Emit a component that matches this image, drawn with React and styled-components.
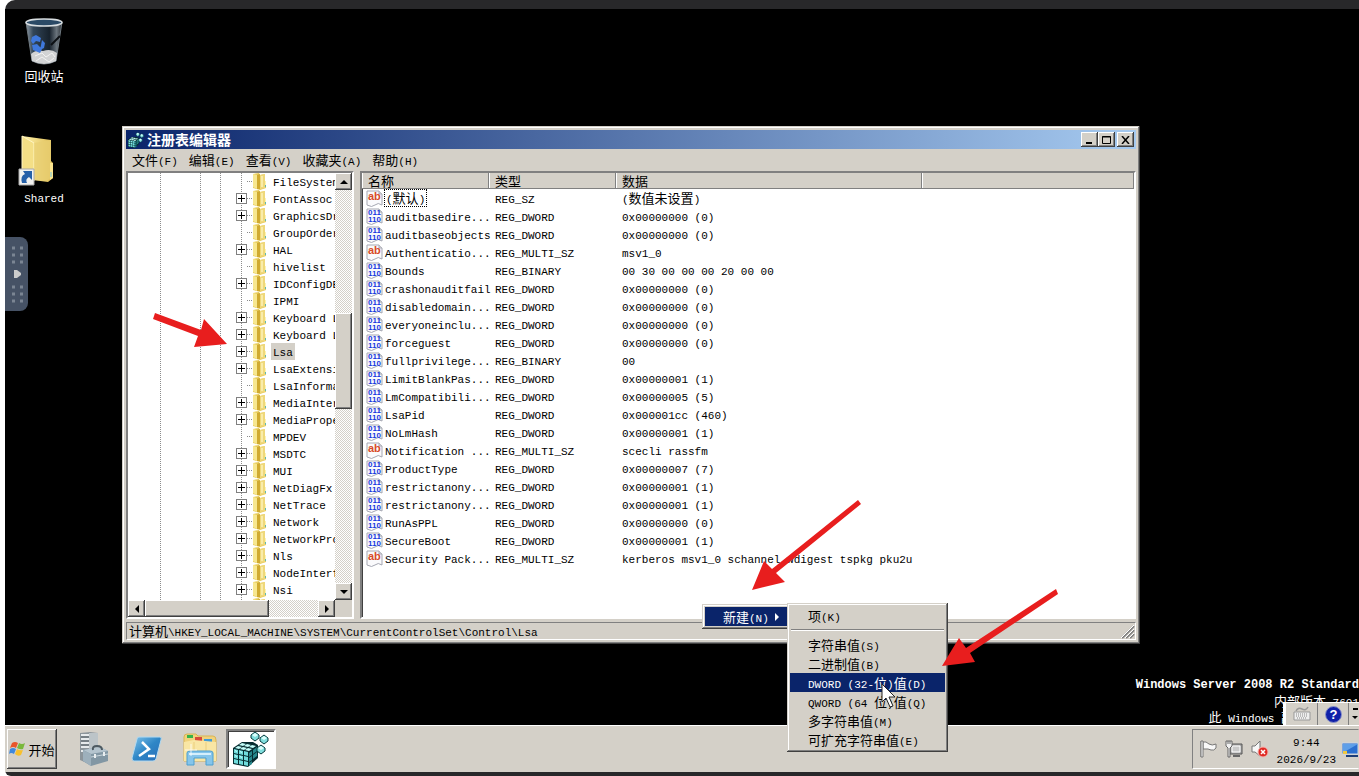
import React from 'react';
import styled, { createGlobalStyle, css } from 'styled-components';

const FACE = '#d4d0c8';
const NAVY = '#0a246a';
const CJK = '"Noto Sans CJK SC", "Liberation Sans", sans-serif';
const MONO = '"Liberation Mono", "Noto Sans CJK SC", monospace';

const GlobalStyle = createGlobalStyle`
  *, *::before, *::after { box-sizing: border-box; }
  body { margin: 0; background: #fff; overflow: hidden; }
  button { font: inherit; color: inherit; padding: 0; margin: 0; border: 0; background: none; }
  ul { list-style: none; margin: 0; padding: 0; }
  svg { display: block; flex: none; }
`;

const raised = css`
  background: ${FACE};
  box-shadow: inset -1px -1px #404040, inset 1px 1px #fff, inset -2px -2px #808080;
`;
const menuEdge = css`
  background: ${FACE};
  box-shadow: inset -1px -1px #404040, inset 1px 1px ${FACE}, inset -2px -2px #808080, inset 2px 2px #fff;
`;
const sunken = css`
  border: 2px solid;
  border-color: #808080 #fff #fff #808080;
  box-shadow: inset 1px 1px #404040;
`;

/* ---------- text ---------- */

const Han = styled.span`
  font-family: ${CJK};
  font-size: 13px;
  white-space: pre;
`;
const Latin = styled.span`
  font-family: ${MONO};
  font-size: 11px;
  line-height: 11px;
  white-space: pre;
`;

function Label({ children }) {
  const parts = children.split(/([\x20-\x7e]+)/).filter(Boolean);
  return (
    <Han>
      {parts.map((part, i) => (/^[\x20-\x7e]/.test(part) ? <Latin key={i}>{part}</Latin> : part))}
    </Han>
  );
}

/* ---------- shell ---------- */

const Frame = styled.div`
  display: flex;
  flex-direction: column;
  min-height: 100vh;
  margin-left: 5px;
  padding: 9px 0 4px;
  background: #28282a;
  border-radius: 10px 0 0 6px;
  color: #000;
  font-family: ${CJK};
  font-size: 13px;
  line-height: 17px;
`;
const Desktop = styled.main`
  position: relative;
  flex: 1;
  background: #000;
  overflow: hidden;
`;
const Shortcut = styled.button`
  position: absolute;
  left: 0;
  top: ${(p) => p.$top}px;
  display: flex;
  flex-direction: column;
  align-items: center;
  gap: 1px;
  width: 78px;
  color: #fff;
`;
const Drawer = styled.button`
  position: absolute;
  left: 0;
  top: 228px;
  display: grid;
  place-items: center;
  width: 23px;
  height: 74px;
  background: #465265;
  border-radius: 0 8px 8px 0;
`;
const Watermark = styled.div`
  position: absolute;
  right: 0;
  bottom: 0;
  display: flex;
  flex-direction: column;
  align-items: flex-end;
  line-height: 15px;
  color: #fff;
`;
const Edition = styled.strong`
  font-family: ${MONO};
  font-size: 12px;
`;
const LanguageBar = styled.div`
  position: absolute;
  right: 0;
  bottom: 0;
  display: flex;
  align-items: center;
  width: 76px;
  height: 23px;
  border-left: 3px solid #fff;
  border-top: 1px solid #fff;
  background: ${FACE};
`;
const LanguageButton = styled.button`
  display: grid;
  place-items: center;
  width: ${(p) => p.$width}px;
  height: 22px;
  border-right: 1px solid #808080;
`;

/* ---------- window ---------- */

const Window = styled.section`
  position: absolute;
  left: 117px;
  right: 219px;
  top: 117px;
  padding: 4px;
  ${menuEdge}
`;
const TitleBar = styled.header`
  display: flex;
  align-items: center;
  height: 19px;
  padding: 0 2px;
  gap: 3px;
  background: linear-gradient(90deg, ${NAVY}, #a6caf0);
`;
const Title = styled.h1`
  flex: 1;
  margin: 0;
  color: #fff;
  font-size: 14px;
  font-weight: 700;
  line-height: 19px;
`;
const CaptionButtons = styled.div`
  display: flex;
  & > :last-child { margin-left: 2px; }
`;
const CaptionButton = styled.button`
  display: grid;
  place-items: center;
  width: 17px;
  height: 15px;
  ${raised}
`;
const MenuBar = styled.nav`
  display: flex;
  gap: 11px;
  height: 22px;
  padding: 1px 6px 0;
`;
const MenuBarItem = styled.button`
  height: 19px;
  line-height: 19px;
`;
const Body = styled.div`
  display: flex;
  gap: 6px;
`;
const TreePane = styled.div`
  width: 228px;
  background: ${FACE};
  ${sunken}
`;
const TreeTop = styled.div`
  display: flex;
  height: 427px;
`;
const guide = (x) =>
  `repeating-linear-gradient(#8c8c8c 0 1px, transparent 1px 2px) ${x}px 0 / 1px 100% no-repeat`;
const Tree = styled.ul`
  flex: 1;
  min-width: 0;
  overflow: hidden;
  background: ${guide(32)}, ${guide(72)}, ${guide(92)}, ${guide(113)}, #fff;
`;
const TreeRow = styled.li`
  display: flex;
  align-items: center;
  height: 17px;
  padding-left: 108px;
  white-space: nowrap;
`;
const Expander = styled.button`
  display: grid;
  place-items: center;
  flex: none;
  width: 11px;
  height: 11px;
  border: 1px solid #808080;
  background: #fff;
`;
const NoExpander = styled.span`
  flex: none;
  width: 11px;
  height: 11px;
`;
const Twig = styled.span`
  flex: none;
  width: 6px;
  height: 1px;
  background: repeating-linear-gradient(90deg, #8c8c8c 0 1px, transparent 1px 2px);
`;
const NodeName = styled.span`
  flex: none;
  margin-left: 4px;
  padding: 0 2px;
  height: 17px;
  line-height: 16px;
  background: ${(p) => (p.$selected ? FACE : 'transparent')};
`;
const Scroller = styled.div`
  display: flex;
  flex-direction: ${(p) => (p.$vertical ? 'column' : 'row')};
  flex: none;
  width: ${(p) => (p.$vertical ? '17px' : 'auto')};
  height: ${(p) => (p.$vertical ? 'auto' : '17px')};
  margin-right: ${(p) => (p.$vertical ? 0 : '17px')};
  background: repeating-conic-gradient(#fff 0 25%, ${FACE} 0 50%) 0 0 / 2px 2px;
`;
const ScrollButton = styled.button`
  display: grid;
  place-items: center;
  flex: none;
  width: 17px;
  height: 17px;
  ${raised}
`;
const Space = styled.span`
  flex: ${(p) => p.$grow} 0 0;
`;
const Thumb = styled.span`
  flex: ${(p) => p.$grow} 0 0;
  ${raised}
`;
const ListPane = styled.div`
  flex: 1;
  min-width: 0;
  background: #fff;
  overflow: hidden;
  ${sunken}
`;
const Table = styled.table`
  width: 100%;
  border-collapse: collapse;
  table-layout: fixed;
`;
const HeadCell = styled.th`
  width: ${(p) => (p.$width ? `${p.$width}px` : 'auto')};
  height: 16px;
  padding: 0 6px;
  overflow: hidden;
  background: ${FACE};
  box-shadow: inset -1px -1px #808080, inset 1px 0 #fff;
  font-weight: 400;
  text-align: left;
  line-height: 16px;
`;
const Cell = styled.td`
  height: 18px;
  padding: 0 0 0 6px;
  white-space: nowrap;
`;
const CellText = styled.div`
  height: 18px;
  line-height: 17px;
`;
const NameCell = styled.div`
  display: flex;
  align-items: center;
  gap: 1px;
  height: 18px;
  margin-left: -2px;
`;
const ValueName = styled.span`
  height: 18px;
  padding: 0 1px;
  line-height: 15px;
  border: 1px ${(p) => (p.$focused ? 'dotted #000' : 'solid transparent')};
  border-left-width: ${(p) => (p.$focused ? '1px' : '0')};
`;
const StatusBar = styled.footer`
  display: flex;
  justify-content: space-between;
  align-items: flex-end;
  height: 18px;
  margin-top: 3px;
  padding-left: 2px;
  border: 1px solid;
  border-color: #808080 #fff #fff #808080;
`;

/* ---------- menus ---------- */

const ContextMenu = styled.div`
  position: absolute;
  left: 697px;
  top: 595px;
  width: 88px;
  padding: 3px;
  ${menuEdge}
`;
const SubMenu = styled.div`
  position: absolute;
  left: 782px;
  top: 594px;
  width: 161px;
  padding: 3px;
  ${menuEdge}
`;
const MenuItem = styled.button`
  display: flex;
  align-items: center;
  justify-content: space-between;
  width: 100%;
  height: 19px;
  padding: 0 6px 0 18px;
  background: ${(p) => (p.$active ? NAVY : 'transparent')};
  color: ${(p) => (p.$active ? '#fff' : '#000')};
`;
const Divider = styled.hr`
  height: 2px;
  margin: 4px 1px;
  border: 0;
  border-top: 1px solid #808080;
  border-bottom: 1px solid #fff;
`;
const Annotations = styled.svg`
  position: absolute;
  left: -5px;
  top: -9px;
  pointer-events: none;
`;

/* ---------- taskbar ---------- */

const Taskbar = styled.footer`
  display: flex;
  align-items: center;
  height: 47px;
  padding-left: 2px;
  border-top: 1px solid #fff;
  background: ${FACE};
`;
const StartButton = styled.button`
  display: flex;
  align-items: center;
  justify-content: center;
  gap: 2px;
  width: 50px;
  height: 40px;
  ${raised}
`;
const QuickLaunch = styled.div`
  display: flex;
  align-items: center;
  flex: 1;
  padding-left: 10px;
`;
const TaskButton = styled.button`
  display: grid;
  place-items: center;
  width: ${(p) => (p.$active ? 50 : 53)}px;
  height: 40px;
  ${(p) => p.$active && css`background: #fff; ${sunken}`}
`;
const Tray = styled.div`
  display: flex;
  align-items: center;
  gap: 8px;
  height: 40px;
  padding-left: 6px;
  border: 1px solid;
  border-color: #808080 transparent #fff #808080;
`;
const Clock = styled.time`
  display: flex;
  flex-direction: column;
  align-items: center;
  margin: 0 -2px 0 0;
  line-height: 17px;
`;

/* ---------- drawings ---------- */

const Triangle = ({ dir, fill = '#000' }) => {
  const d = {
    up: 'M0 6 4 2 8 6Z',
    down: 'M0 2 4 6 8 2Z',
    left: 'M6 0 2 4 6 8Z',
    right: 'M2 0 6 4 2 8Z',
  }[dir];
  return <svg width="8" height="8"><path d={d} fill={fill} /></svg>;
};

const RegeditIcon = ({ size }) => (
  <svg width={size} height={size} viewBox="0 0 36 36">
    <path d="M0 17 9 11H20L25 14V27L15 36 0 33Z" fill="#062c30" />
    <g fill="#6fdcdc">
      <path d="M1 18l4 1v4l-4-1zM6 19l4 1v4l-4-1zM11 20l4 1v4l-4-1z" />
      <path d="M1 23l4 1v4l-4-1zM6 24l4 1v4l-4-1zM11 25l4 1v4l-4-1z" />
      <path d="M1 28l4 1v4l-4-1zM6 29l4 1v4l-4-1zM11 30l4 1v4l-4-1z" />
    </g>
    <g fill="#c4fffb">
      <path d="M2 17l3-2 4 1-3 2zM7 18l3-2 4 1-3 2zM12 19l3-2 4 1-3 2z" />
      <path d="M6 14l3-2 4 1-3 2zM11 15l3-2 4 1-3 2zM16 16l3-2 4 1-3 2z" />
      <path d="M2 19l2 1v1l-2-1zM7 20l2 1v1l-2-1zM2 24l2 1v1l-2-1zM7 25l2 1v1l-2-1z" />
    </g>
    <g fill="#27888c">
      <path d="M16 22l3-2v4l-3 2zM20 19l4-3v4l-4 3zM16 27l3-2v4l-3 2zM20 24l4-3v4l-4 3zM16 32l3-2v3l-3 2z" />
    </g>
    <g fill="#7fdedd" stroke="#06393c">
      <path d="M22 1l4 3v3l-4 3-4-3V4Z" />
      <path d="M31 4l4 3v3l-4 3-4-3V7Z" />
      <path d="M28 14l4 3v3l-4 3-4-3v-3Z" />
    </g>
    <path d="M22 2l3 2-3 2-3-2zM31 5l3 2-3 2-3-2zM28 15l3 2-3 2-3-2z" fill="#dcfffd" />
  </svg>
);

const FolderIcon = () => (
  <svg width="14" height="17" viewBox="0 0 14 17">
    <path d="M0 1 6 0 7 2 12 1V8l1 1v6l-6 2-7-2Z" fill="#e6ca5c" />
    <path d="M0 1 4 2V16L0 14Z" fill="#f7e790" />
    <path d="M4 2 7 1V16L4 16Z" fill="#d0aa30" />
    <path d="M7 2 12 1V15L7 16Z" fill="#efd87a" />
    <path d="M8 3h2v11H8z" fill="#f9ecaa" />
    <path d="M12 8h1v6h-1z" fill="#fff5b0" />
    <path d="M12 12h1v2h-1z" fill="#60b8b0" />
  </svg>
);

const ValueIcon = ({ text }) => (
  <svg width="17" height="17" viewBox="0 0 17 17" aria-hidden="true">
    <path d="M1 1H13L16 4V15Q12 12 9 15T1 15Z" fill="#fafafc" stroke="#a5a7b2" />
    <path d="M13 1V4H16" fill="#ddd" stroke="#a5a7b2" />
    {text ? (
      <text x="2" y="10" fontFamily="Liberation Sans" fontSize="11" fontWeight="700" fill="#d84a28">ab</text>
    ) : (
      <g fontFamily="Liberation Sans" fontSize="8" fontWeight="700" fill="#1638e0">
        <text x="2" y="7">011</text>
        <text x="2" y="14">110</text>
      </g>
    )}
  </svg>
);

const RecycleBin = () => (
  <svg width="40" height="48" viewBox="0 0 40 48">
    <defs>
      <linearGradient id="bin" x1="0" x2="1">
        <stop offset="0" stopColor="#8e9aa4" />
        <stop offset=".2" stopColor="#334658" />
        <stop offset=".65" stopColor="#17222d" />
        <stop offset=".85" stopColor="#6a747c" />
        <stop offset="1" stopColor="#2a3036" />
      </linearGradient>
    </defs>
    <path d="M2 4 8 43Q20 49 32 43L38 4Z" fill="url(#bin)" stroke="#707a82" />
    <ellipse cx="20" cy="4.500" rx="18" ry="3.500" fill="#2b4a66" stroke="#d8dde0" strokeWidth="1.500" />
    <path d="M7 36Q12 31 19 33 27 30 33 35L32 43Q20 49 8 43Z" fill="#d2d3d4" />
    <path d="M11 38l7-3 4 4 6-4 3 4M12 43l6-4 7 5 5-4" fill="none" stroke="#f2f2f2" />
    <path d="M8 19l4-2 5 3-1 4-4-1-3 3-2-3zM18 22l3 3-1 5-4 2zM8 27l5-1 5 5-2 4-7-3z" fill="#3f78dc" />
    <path d="M27 27 36 18" stroke="#0c1014" strokeWidth="2" />
  </svg>
);

const SharedFolder = () => (
  <svg width="52" height="53" viewBox="0 0 52 53">
    <defs>
      <linearGradient id="folder" x1="0" x2="1">
        <stop offset="0" stopColor="#fff3ac" />
        <stop offset="1" stopColor="#dfbd55" />
      </linearGradient>
    </defs>
    <path d="M4 2 33 6V27l2 2V44L30 48 15 46 4 38Z" fill="url(#folder)" />
    <path d="M4 2 16 9V47L4 38Z" fill="#f4df86" stroke="#fff5c4" />
    <path d="M16 9 33 6V44L28 47 16 46Z" fill="#e8ce72" opacity=".7" />
    <path d="M32 29h3v15l-3 2z" fill="#fbe48e" />
    <path d="M33 38v5" stroke="#70c4e0" />
    <path d="M1 35H16V51H1Z" fill="#f1f1ef" stroke="#a9a9a9" />
    <path d="M4 49Q2 42 7 40L5 37H14V46L11 43Q7 45 9 49Z" fill="#2560a8" />
  </svg>
);

const WindowsFlag = () => (
  <svg width="17" height="16" viewBox="0 0 17 16">
    <path d="M3 2Q6 0 9 2L7 7Q4 5 1 7Z" fill="#e8552a" />
    <path d="M10 2Q13 4 16 2L14 8Q11 9 8 7Z" fill="#7ab83c" />
    <path d="M1 8Q4 6 7 8L5 13Q2 11 0 13Z" fill="#3f88dc" />
    <path d="M8 8Q11 10 14 9L12 14Q9 16 6 13Z" fill="#f8c02c" />
  </svg>
);

const ServerIcon = () => (
  <svg width="32" height="34" viewBox="0 0 32 34">
    <path d="M2 1 12 0 20 1V27L11 32 2 28Z" fill="#8c959b" />
    <path d="M11 1 20 1V27L11 30Z" fill="#bcc4c8" />
    <path d="M3 3h8M3 7h8M3 11h8M3 15h8M3 19h8" stroke="#e6eaec" strokeWidth="2" />
    <path d="M3 5h8M3 9h8M3 13h8" stroke="#5f686e" />
    <path d="M5 18 22 15 30 19V29L13 34 5 29Z" fill="#8297a4" />
    <path d="M5 18 13 22 30 19 22 15Z" fill="#b4c4ce" />
    <path d="M5 18 13 22V34L5 29Z" fill="#9db0bc" />
    <path d="M13 25 30 22" stroke="#c8d5dc" />
    <path d="M15 18Q14 14 19 14T24 18" fill="none" stroke="#4d5a62" strokeWidth="2" />
    <path d="M17 22v4M26 20v4" stroke="#e9eef0" strokeWidth="2" />
  </svg>
);

const PowerShellIcon = () => (
  <svg width="32" height="28" viewBox="0 0 32 28">
    <defs>
      <linearGradient id="ps" x1="0" x2="1" y1="0" y2="1">
        <stop offset="0" stopColor="#7fc3ea" />
        <stop offset=".5" stopColor="#2e86c6" />
        <stop offset="1" stopColor="#2a6db8" />
      </linearGradient>
    </defs>
    <path d="M8 2H29Q31 2 30 5L25 24Q24 26 22 26H3Q1 26 1 23L6 4Q6 2 8 2Z" fill="url(#ps)" stroke="#b3d9ef" />
    <path d="M11 7 18 14 8 21M17 21h7" fill="none" stroke="#fff" strokeWidth="2.500" />
  </svg>
);

const ExplorerIcon = () => (
  <svg width="36" height="34" viewBox="0 0 36 34">
    <path d="M2 5Q2 2 5 2H14L16 4H31Q34 4 34 8V29H2Z" fill="#f0d27c" stroke="#d8b455" />
    <path d="M5 3h6v3H5z" fill="#35b34a" />
    <path d="M13 5h7v4h-7z" fill="#d84a38" />
    <path d="M22 7h8v3h-8z" fill="#3f9bd8" />
    <path d="M2 10 12 8 34 10V29H2Z" fill="#f9e6a4" />
    <path d="M12 10V28M24 10V28" stroke="#ebce7c" />
    <path d="M5 33V21Q5 19 8 19H28Q31 19 31 21V33H24V26H12V33Z" fill="#86c5ea" stroke="#4c9fd0" />
    <path d="M7 22h22" stroke="#d5effc" strokeWidth="2" />
    <path d="M9 12v12M3 18h12" stroke="#fff" opacity=".8" />
  </svg>
);

const FlagIcon = () => (
  <svg width="18" height="18" viewBox="0 0 18 18">
    <path d="M2 1V17M4 2Q7 1 10 4 13 6 17 4V8Q15 11 12 10L9 9H4Z" fill="#f8f8f8" stroke="#777" />
    <path d="M2 1h2v16H2z" fill="#fff" stroke="#777" />
  </svg>
);
const NetworkIcon = () => (
  <svg width="18" height="18" viewBox="0 0 18 18">
    <path d="M5 4H17V14H5Z" fill="#a9a9a9" stroke="#555" />
    <path d="M7 6h8v6H7z" fill="#c9c9c9" stroke="#fff" />
    <path d="M8 16h7" stroke="#666" strokeWidth="2" />
    <path d="M1 1h6v5L5 8v9H3V8L1 6Z" fill="#f2f2f2" stroke="#666" />
    <path d="M3 1v3M5 1v3" stroke="#666" />
  </svg>
);
const VolumeIcon = () => (
  <svg width="18" height="18" viewBox="0 0 18 18">
    <path d="M1 6H4L9 1V16L4 12H1Z" fill="#f7f7f7" stroke="#777" />
    <circle cx="12" cy="12" r="5" fill="#e02a24" stroke="#f7b4ae" />
    <path d="m10 10 4 4m0-4-4 4" stroke="#fff" strokeWidth="1.500" />
  </svg>
);
const MonitorIcon = () => (
  <svg width="16" height="16" viewBox="0 0 16 16">
    <path d="M0 2H16V13H0Z" fill="#2b6fd0" stroke="#cfd8e4" />
    <path d="M1 3H16L4 10H1Z" fill="#5f9fe8" />
    <path d="M1 10h4v3H1z" fill="#f0c840" />
    <path d="M4 15h12" stroke="#1d3e78" strokeWidth="2" />
  </svg>
);

/* ---------- data ---------- */

const tree = [
  ['FileSystem', 0], ['FontAssoc', 1], ['GraphicsDr', 1], ['GroupOrder', 0],
  ['HAL', 1], ['hivelist', 0], ['IDConfigDB', 1], ['IPMI', 0], ['Keyboard L', 1],
  ['Keyboard L', 1], ['Lsa', 1], ['LsaExtensi', 1], ['LsaInforma', 0],
  ['MediaInter', 1], ['MediaPrope', 1], ['MPDEV', 0], ['MSDTC', 1], ['MUI', 1],
  ['NetDiagFx', 1], ['NetTrace', 1], ['Network', 1], ['NetworkPro', 1], ['Nls', 1],
  ['NodeInterf', 1], ['Nsi', 1], ['', 0],
];

const values = [
  ['(默认)', 'REG_SZ', '(数值未设置)'],
  ['auditbasedire...', 'REG_DWORD', '0x00000000 (0)'],
  ['auditbaseobjects', 'REG_DWORD', '0x00000000 (0)'],
  ['Authenticatio...', 'REG_MULTI_SZ', 'msv1_0'],
  ['Bounds', 'REG_BINARY', '00 30 00 00 00 20 00 00'],
  ['crashonauditfail', 'REG_DWORD', '0x00000000 (0)'],
  ['disabledomain...', 'REG_DWORD', '0x00000000 (0)'],
  ['everyoneinclu...', 'REG_DWORD', '0x00000000 (0)'],
  ['forceguest', 'REG_DWORD', '0x00000000 (0)'],
  ['fullprivilege...', 'REG_BINARY', '00'],
  ['LimitBlankPas...', 'REG_DWORD', '0x00000001 (1)'],
  ['LmCompatibili...', 'REG_DWORD', '0x00000005 (5)'],
  ['LsaPid', 'REG_DWORD', '0x000001cc (460)'],
  ['NoLmHash', 'REG_DWORD', '0x00000001 (1)'],
  ['Notification ...', 'REG_MULTI_SZ', 'scecli rassfm'],
  ['ProductType', 'REG_DWORD', '0x00000007 (7)'],
  ['restrictanony...', 'REG_DWORD', '0x00000001 (1)'],
  ['restrictanony...', 'REG_DWORD', '0x00000001 (1)'],
  ['RunAsPPL', 'REG_DWORD', '0x00000000 (0)'],
  ['SecureBoot', 'REG_DWORD', '0x00000001 (1)'],
  ['Security Pack...', 'REG_MULTI_SZ', 'kerberos msv1_0 schannel wdigest tspkg pku2u'],
];

const newItems = ['字符串值(S)', '二进制值(B)', 'DWORD (32-位)值(D)', 'QWORD (64 位)值(Q)', '多字符串值(M)', '可扩充字符串值(E)'];

/* ---------- page ---------- */

function RegistryTree() {
  return (
    <TreePane>
      <TreeTop>
        <Tree>
          {tree.map(([name, expandable], i) => (
            <TreeRow key={i}>
              {expandable ? (
                <Expander aria-label={`展开 ${name}`}>
                  <svg width="7" height="7"><path d="M0 3.500H7M3.500 0V7" stroke="#000" /></svg>
                </Expander>
              ) : <NoExpander />}
              <Twig />
              <FolderIcon />
              <NodeName $selected={name === 'Lsa'}><Label>{name}</Label></NodeName>
            </TreeRow>
          ))}
        </Tree>
        <Scroller $vertical>
          <ScrollButton aria-label="向上滚动"><Triangle dir="up" /></ScrollButton>
          <Space $grow={123} />
          <Thumb $grow={96} />
          <Space $grow={174} />
          <ScrollButton aria-label="向下滚动"><Triangle dir="down" /></ScrollButton>
        </Scroller>
      </TreeTop>
      <Scroller>
        <ScrollButton aria-label="向左滚动"><Triangle dir="left" /></ScrollButton>
        <Thumb $grow={125} />
        <Space $grow={49} />
        <ScrollButton aria-label="向右滚动"><Triangle dir="right" /></ScrollButton>
      </Scroller>
    </TreePane>
  );
}

function ValueList() {
  return (
    <ListPane>
      <Table>
        <thead>
          <tr>
            <HeadCell $width={127}>名称</HeadCell>
            <HeadCell $width={127}>类型</HeadCell>
            <HeadCell $width={306}>数据</HeadCell>
            <HeadCell aria-hidden="true" />
          </tr>
        </thead>
        <tbody>
          {values.map(([name, type, data], i) => (
            <tr key={i}>
              <Cell>
                <NameCell>
                  <ValueIcon text={type.endsWith('SZ')} />
                  <ValueName $focused={i === 0}><Label>{name}</Label></ValueName>
                </NameCell>
              </Cell>
              <Cell><CellText><Label>{type}</Label></CellText></Cell>
              <Cell colSpan={2}><CellText><Label>{data}</Label></CellText></Cell>
            </tr>
          ))}
        </tbody>
      </Table>
    </ListPane>
  );
}

export default function App() {
  return (
    <>
      <GlobalStyle />
      <Frame>
        <Desktop>
          <Shortcut $top={9}><RecycleBin /><Label>回收站</Label></Shortcut>
          <Shortcut $top={125}><SharedFolder /><Label>Shared</Label></Shortcut>

          <Drawer aria-label="展开侧栏">
            <svg width="14" height="60" viewBox="0 0 14 60">
              <path d="M2 4h3M10 4h3M2 11h3M10 11h3M2 18h3M10 18h3M2 43h3M10 43h3M2 50h3M10 50h3M2 57h3M10 57h3" stroke="#7b8593" strokeWidth="3" />
              <path d="M4 26h3l4 3v2l-4 3H4Z" fill="#ccc" />
            </svg>
          </Drawer>

          <Window>
            <TitleBar>
              <RegeditIcon size={16} />
              <Title>注册表编辑器</Title>
              <CaptionButtons>
                <CaptionButton aria-label="最小化"><svg width="11" height="9"><path d="M2 8h6" stroke="#000" strokeWidth="2" /></svg></CaptionButton>
                <CaptionButton aria-label="最大化"><svg width="11" height="10"><path d="M1.500 1.500h8v7h-8ZM1 2h9" fill="none" stroke="#000" /></svg></CaptionButton>
                <CaptionButton aria-label="关闭"><svg width="9" height="8"><path d="m1 0 7 8M8 0 1 8" stroke="#000" strokeWidth="1.500" /></svg></CaptionButton>
              </CaptionButtons>
            </TitleBar>
            <MenuBar>
              {['文件(F)', '编辑(E)', '查看(V)', '收藏夹(A)', '帮助(H)'].map((m) => (
                <MenuBarItem key={m}><Label>{m}</Label></MenuBarItem>
              ))}
            </MenuBar>
            <Body>
              <RegistryTree />
              <ValueList />
            </Body>
            <StatusBar>
              <Label>{'计算机\\HKEY_LOCAL_MACHINE\\SYSTEM\\CurrentControlSet\\Control\\Lsa'}</Label>
              <svg width="14" height="14"><path d="M1 13 13 1M5 13l8-8M9 13l4-4" stroke="#808080" strokeWidth="2" /><path d="M0 13 13 0M4 13l9-9M8 13l5-5" stroke="#fff" /></svg>
            </StatusBar>
          </Window>

          <Watermark>
            <Edition>Windows Server 2008 R2 Standard</Edition>
            <Label>内部版本 7601</Label>
            <Label>此 Windows 副本不是正版</Label>
          </Watermark>

          <LanguageBar>
            <LanguageButton $width={32} aria-label="键盘">
              <svg width="18" height="16" viewBox="0 0 18 16">
                <path d="M3 5Q5 1 9 3T15 1" fill="none" stroke="#999" strokeWidth="1.500" />
                <path d="M1 6H17V14H1Z" fill="#eee" stroke="#999" />
                <path d="M3 8h12M3 10h12M4 12h10" stroke="#888" strokeDasharray="1 1" />
              </svg>
            </LanguageButton>
            <LanguageButton $width={31} aria-label="帮助">
              <svg width="17" height="17">
                <circle cx="8.500" cy="8.500" r="8" fill="#1020a8" stroke="#8890c8" />
                <text x="8.500" y="13" textAnchor="middle" fontFamily="Liberation Sans" fontSize="13" fontWeight="700" fill="#fff">?</text>
              </svg>
            </LanguageButton>
            <svg width="9" height="16"><path d="M4 3h5" stroke="#000" strokeWidth="2" /><path d="M3 10h6l-3 3Z" /></svg>
          </LanguageBar>
        </Desktop>

        <Taskbar>
          <StartButton><WindowsFlag /><Label>开始</Label></StartButton>
          <QuickLaunch>
            <TaskButton aria-label="服务器管理器"><ServerIcon /></TaskButton>
            <TaskButton aria-label="PowerShell"><PowerShellIcon /></TaskButton>
            <TaskButton aria-label="资源管理器"><ExplorerIcon /></TaskButton>
            <TaskButton $active aria-label="注册表编辑器"><RegeditIcon size={36} /></TaskButton>
          </QuickLaunch>
          <Tray>
            <FlagIcon />
            <NetworkIcon />
            <VolumeIcon />
            <Clock><Label>9:44</Label><Label>2026/9/23</Label></Clock>
            <MonitorIcon />
          </Tray>
        </Taskbar>
      </Frame>
      <Overlay />
    </>
  );
}

const OverlayLayer = styled.div`
  position: absolute;
  left: 5px;
  top: 9px;
  font-size: 13px;
  line-height: 17px;
`;

/* Menus and arrows lie over both the desktop and the taskbar. */
function Overlay() {
  return (
    <OverlayLayer>
      <ContextMenu>
        <MenuItem $active><Label>新建(N)</Label><Triangle dir="right" fill="#fff" /></MenuItem>
      </ContextMenu>
      <SubMenu>
        <MenuItem><Label>项(K)</Label></MenuItem>
        <Divider />
        {newItems.map((m, i) => (
          <MenuItem key={m} $active={i === 2}><Label>{m}</Label></MenuItem>
        ))}
      </SubMenu>
      <Annotations width="1359" height="776">
        <g fill="#e81e1e">
          <path d="M155 313 201 330 204 319 227 344 194 347 198 336 153 319Z" />
          <path d="M858 500 772 569 764 561 752 590 785 582 776 573 861 504Z" />
          <path d="M1056 589 966 648 959 638 942 666 975 662 970 653 1058 594Z" />
        </g>
        <path d="M882 684V702L886 698 890 707 893 706 889 697H895Z" fill="#fff" stroke="#222" />
      </Annotations>
    </OverlayLayer>
  );
}
